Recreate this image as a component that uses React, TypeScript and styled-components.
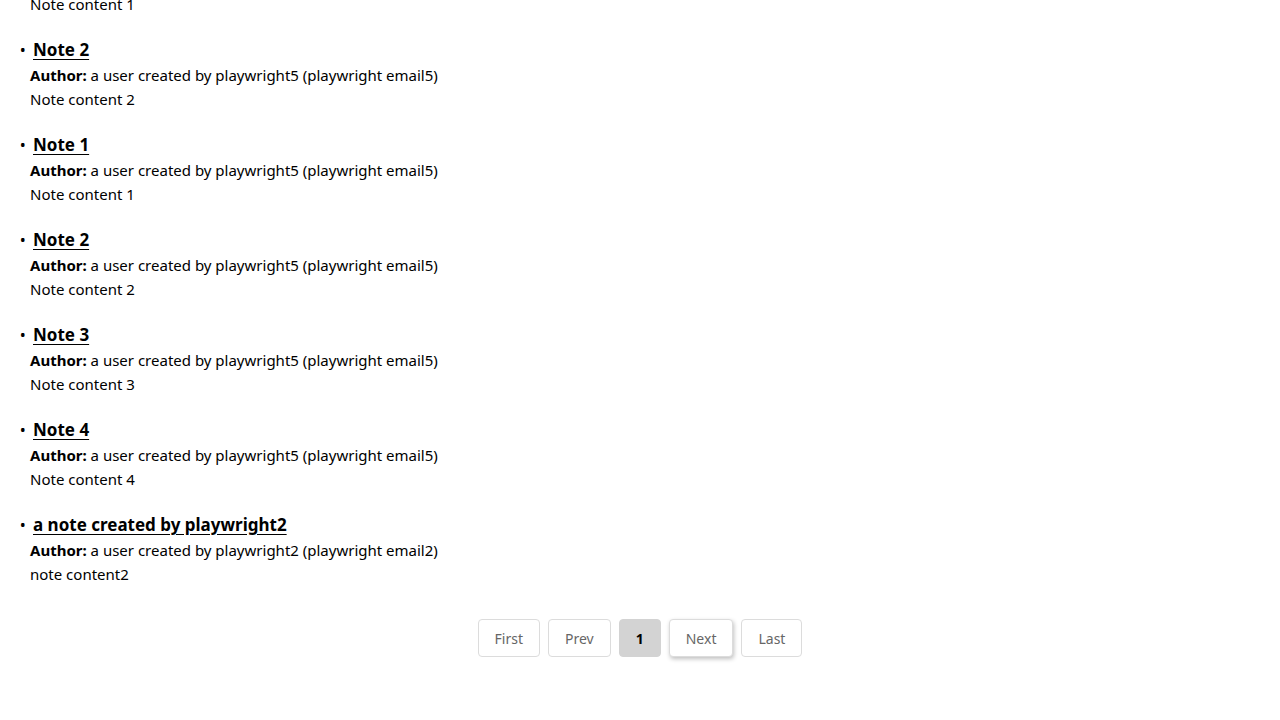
import React from "react";
import styled, { createGlobalStyle } from "styled-components";

const Global = createGlobalStyle`
  html, body { margin: 0; padding: 0; background: #fff; }
  body { font-family: "Noto Sans", "Open Sans", sans-serif; color: #000; overflow: hidden; }
`;

const Page = styled.div`
  margin-top: -59px;
  padding-bottom: 60px;
`;

const List = styled.ul`
  list-style: disc;
  margin: 0;
  padding: 0 0 0 30px;
`;

const Item = styled.li`
  margin: 0 0 20px 0;
  &::marker {
    content: "•\u00a0";
    font-size: 16px;
  }
`;

const Title = styled.a`
  display: inline-block;
  margin-left: 3px;
  font-size: 17px;
  line-height: 27px;
  font-weight: 700;
  color: #000;
  text-decoration: underline;
  text-underline-offset: 3px;
`;

const Line = styled.div`
  font-size: 15px;
  line-height: 24px;
`;

const Bold = styled.strong`
  font-weight: 700;
`;

const Pager = styled.nav`
  display: flex;
  justify-content: center;
  gap: 8px;
  margin-top: 33px;
`;

const PageBtn = styled.button<{ $active?: boolean; $focus?: boolean }>`
  height: 38px;
  padding: 0 16px;
  border: 1px solid ${(p) => (p.$active ? "#d3d3d3" : "#dcdcdc")};
  border-radius: 4px;
  background: ${(p) => (p.$active ? "#d3d3d3" : "#fff")};
  color: ${(p) => (p.$active ? "#000" : "#666")};
  font-family: "Noto Sans", "Open Sans", sans-serif;
  font-size: 14px;
  font-weight: ${(p) => (p.$active ? 700 : 400)};
  box-shadow: ${(p) => (p.$focus ? "1px 2px 4px rgba(0,0,0,0.25)" : "none")};
  cursor: pointer;
`;

const notes = [
  { title: "Note 1", author: "a user created by playwright5 (playwright email5)", content: "Note content 1" },
  { title: "Note 2", author: "a user created by playwright5 (playwright email5)", content: "Note content 2" },
  { title: "Note 1", author: "a user created by playwright5 (playwright email5)", content: "Note content 1" },
  { title: "Note 2", author: "a user created by playwright5 (playwright email5)", content: "Note content 2" },
  { title: "Note 3", author: "a user created by playwright5 (playwright email5)", content: "Note content 3" },
  { title: "Note 4", author: "a user created by playwright5 (playwright email5)", content: "Note content 4" },
  { title: "a note created by playwright2", author: "a user created by playwright2 (playwright email2)", content: "note content2" },
];

export default function App() {
  return (
    <>
      <Global />
      <Page>
        <List>
          {notes.map((n, i) => (
            <Item key={i}>
              <Title href="#">{n.title}</Title>
              <Line>
                <Bold>Author:</Bold> {n.author}
              </Line>
              <Line>{n.content}</Line>
            </Item>
          ))}
        </List>
        <Pager>
          <PageBtn>First</PageBtn>
          <PageBtn>Prev</PageBtn>
          <PageBtn $active>1</PageBtn>
          <PageBtn $focus>Next</PageBtn>
          <PageBtn>Last</PageBtn>
        </Pager>
      </Page>
    </>
  );
}
